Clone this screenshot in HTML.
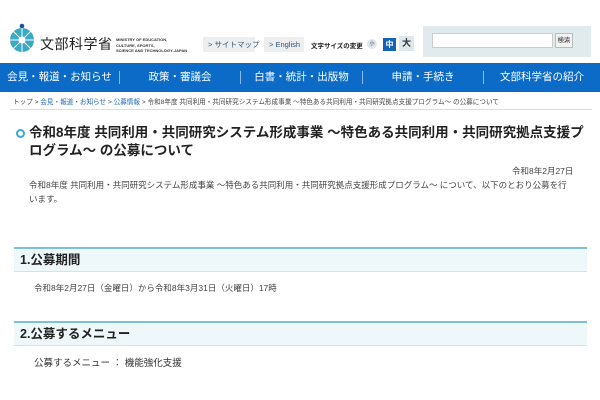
<!DOCTYPE html>
<html><head><meta charset="utf-8"><style>
*{margin:0;padding:0;box-sizing:border-box}
body{width:600px;height:400px;background:#fff;font-family:"Liberation Sans","Noto Sans CJK JP",sans-serif;color:#333;position:relative;overflow:hidden}
.a{position:absolute;white-space:nowrap}
.nav{position:absolute;left:0;top:63px;width:600px;height:29px;background:#0b6bc6}
.nav span{position:absolute;top:0;line-height:29px;color:#fff;font-size:10.5px;text-align:center}
.sep{position:absolute;top:8px;width:1px;height:13px;background:#8bb8e4}
.sh{position:absolute;left:14px;width:573px;height:25px;border-top:2px solid #7cc0da;background:#eef8fb;border-bottom:1px solid #dde;font-size:12.5px;font-weight:bold;line-height:22px;padding-left:6px;color:#222}
</style></head><body>
<svg class="a" style="left:9px;top:22px" width="28" height="32" viewBox="0 0 28 32">
<circle cx="13" cy="4" r="2.3" fill="#1a4f9a"/>
<circle cx="13" cy="18" r="12" fill="#3aa9c4"/>
<g stroke="#fff" stroke-width="1"><line x1="13" y1="6" x2="13" y2="30"/><line x1="1" y1="18" x2="25" y2="18"/><line x1="4.5" y1="9.5" x2="21.5" y2="26.5"/><line x1="21.5" y1="9.5" x2="4.5" y2="26.5"/></g>
<circle cx="13" cy="18" r="3.5" fill="#fff"/>
</svg>
<div class="a" style="left:40px;top:34px;font-size:14px;color:#222;letter-spacing:0.5px">文部科学省</div>
<div class="a" style="left:116px;top:37px;font-size:4px;line-height:5.5px;font-weight:bold;color:#333">MINISTRY OF EDUCATION,<br>CULTURE, SPORTS,<br>SCIENCE AND TECHNOLOGY-JAPAN</div>
<div class="a" style="left:203px;top:37px;width:52px;height:15px;background:#eceeef;font-size:7.5px;color:#357;line-height:15px;padding-left:5px">&gt; サイトマップ</div>
<div class="a" style="left:264px;top:37px;width:40px;height:15px;background:#eceeef;font-size:7.5px;color:#357;line-height:15px;padding-left:5px">&gt; English</div>
<div class="a" style="left:311px;top:40px;font-size:6.5px;font-weight:bold;color:#222">文字サイズの変更</div>
<div class="a" style="left:367px;top:39px;width:10px;height:10px;border-radius:50%;background:#dde8ee;font-size:5px;text-align:center;line-height:10px">小</div>
<div class="a" style="left:383px;top:38px;width:13px;height:13px;background:#1563b5;color:#fff;font-size:8px;text-align:center;line-height:13px;font-weight:bold">中</div>
<div class="a" style="left:399px;top:36px;width:15px;height:15px;background:#dde8ee;font-size:9px;text-align:center;line-height:15px;font-weight:bold">大</div>
<div class="a" style="left:423px;top:26px;width:168px;height:31px;background:#e1ebee"></div>
<div class="a" style="left:432px;top:33px;width:121px;height:15px;background:#fff;border:1px solid #ccc"></div>
<div class="a" style="left:555px;top:33px;width:18px;height:15px;background:#f3f3f3;border:1px solid #bbb;font-size:6.5px;line-height:13px;text-align:center">検索</div>
<div class="nav">
<span style="left:0;width:119px">会見・報道・お知らせ</span><div class="sep" style="left:119px"></div>
<span style="left:120px;width:120px">政策・審議会</span><div class="sep" style="left:240px"></div>
<span style="left:241px;width:121px">白書・統計・出版物</span><div class="sep" style="left:362px"></div>
<span style="left:363px;width:120px">申請・手続き</span><div class="sep" style="left:483px"></div>
<span style="left:484px;width:116px">文部科学省の紹介</span>
</div>
<div class="a" style="left:13px;top:96px;font-size:6.6px;color:#444"><span>トップ</span> &gt; <span style="color:#1a64b0">会見・報道・お知らせ</span> &gt; <span style="color:#1a64b0">公募情報</span> &gt; 令和8年度 共同利用・共同研究システム形成事業 ～特色ある共同利用・共同研究拠点支援プログラム～ の公募について</div>
<div class="a" style="left:10px;top:109px;width:582px;height:1px;background:#ddd"></div>
<div class="a" style="left:16px;top:129px;width:9px;height:9px;border-radius:50%;border:2.5px solid #3aa9d4;background:#fff"></div>
<div class="a" style="left:29px;top:124px;font-size:13.5px;font-weight:bold;line-height:18px;color:#222;white-space:normal;width:565px">令和8年度 共同利用・共同研究システム形成事業 ～特色ある共同利用・共同研究拠点支援プログラム～ の公募について</div>
<div class="a" style="left:512px;top:165px;font-size:8.5px;color:#444">令和8年2月27日</div>
<div class="a" style="left:29px;top:179px;font-size:8.5px;color:#444;white-space:normal;width:545px;line-height:13.5px">令和8年度 共同利用・共同研究システム形成事業 ～特色ある共同利用・共同研究拠点支援形成プログラム～ について、以下のとおり公募を行います。</div>
<div class="sh" style="top:247px">1.公募期間</div>
<div class="a" style="left:34px;top:282px;font-size:8.5px;color:#444">令和8年2月27日（金曜日）から令和8年3月31日（火曜日）17時</div>
<div class="sh" style="top:321px">2.公募するメニュー</div>
<div class="a" style="left:34px;top:355px;font-size:9.5px;color:#333">公募するメニュー ： 機能強化支援</div>
</body></html>
